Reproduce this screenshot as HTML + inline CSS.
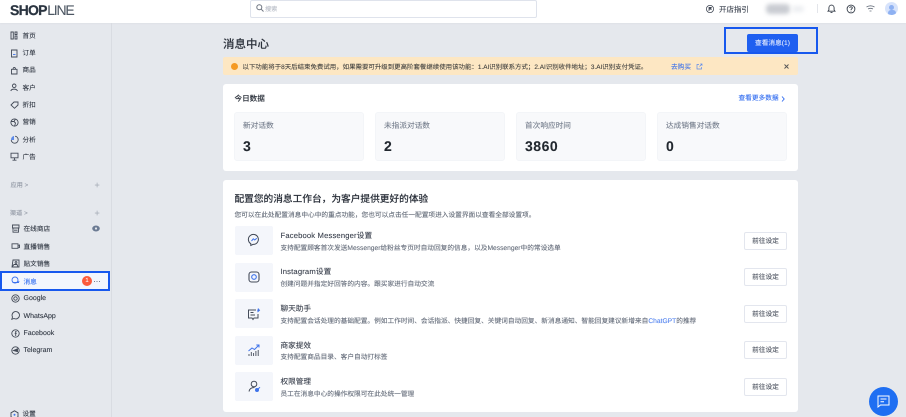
<!DOCTYPE html>
<html lang="zh"><head><meta charset="utf-8"><title>消息中心</title>
<style>
*{box-sizing:border-box}
html,body{margin:0;padding:0;width:906px;height:417px;overflow:hidden;background:#e5e8ed}
body{font-family:"Liberation Sans","Noto Sans CJK SC",sans-serif;color:#333b4a;text-rendering:geometricPrecision;-webkit-text-stroke:.08px currentColor}
#r{position:absolute;left:0;top:0;width:906px;height:417px;overflow:hidden;filter:blur(.35px)}
.a{position:absolute;white-space:nowrap}
.n{position:absolute;left:22.500px;font-size:6.600px;line-height:10px;color:#2b323e;white-space:nowrap}
.m{position:absolute;left:23.500px;font-size:6.700px;line-height:10px;color:#2b323e;white-space:nowrap}
.l{font-size:7px}
.card{position:absolute;background:#fff;border-radius:3px}
.st{position:absolute;top:112px;height:49px;width:130px;background:#f8f9fb;border:1px solid #f3f5f8;border-radius:3px}
.st b{position:absolute;left:8px;top:7px;font-size:7.670px;line-height:12px;font-weight:400;color:#747d8c}
.st i{position:absolute;left:8px;top:25px;font-style:normal;font-weight:700;font-size:14px;line-height:16px;color:#22282f;letter-spacing:.5px}
.ib{position:absolute;left:235px;width:38px;height:29px;background:#f4f6fb;border-radius:2px}
.t{position:absolute;left:280.500px;font-size:7.650px;line-height:10px;color:#343b48;white-space:nowrap}
.d{position:absolute;left:280.500px;font-size:6.700px;line-height:10px;color:#626a78;white-space:nowrap}
.b{position:absolute;left:744px;width:43px;height:18px;background:#fff;border:1px solid #e3e6ee;border-radius:2px;font-size:6.700px;line-height:17px;text-align:center;color:#444b58}
svg{position:absolute;overflow:visible;fill:none}
</style></head><body><div id="r">
<div class="a" style="left:0;top:0;width:906px;height:23px;background:#fff;box-shadow:0 1px 1px #dfe2e8"></div>
<div class="a" style="left:10px;top:3px;font-size:14px;line-height:14px;color:#2a3440"><b style="letter-spacing:-.75px;-webkit-text-stroke:.25px #2a3440">SHOP</b><span style="font-weight:400;color:#4d5763;letter-spacing:-1.200px;margin-left:.5px">LINE</span></div>
<div class="a" style="left:249.500px;top:0;width:287px;height:18px;background:#fff;border:1px solid #dfe3ec;border-radius:2px"></div>
<svg style="left:256px;top:4px" width="8" height="8" viewBox="0 0 8 8" stroke="#6d7480" stroke-width="1"><circle cx="3.300" cy="3.300" r="2.500"/><path d="M5.200 5.200L7.500 7.500"/></svg>
<div class="a" style="left:265px;top:5px;font-size:6.200px;line-height:9px;color:#b7bcc6">搜索</div>
<svg style="left:706px;top:4.500px" width="8" height="8" viewBox="0 0 8 8" stroke="#444b58" stroke-width=".8"><circle cx="4" cy="4" r="3.600"/><path d="M3 6V2.400h2.300L4.700 3.400 5.300 4.200H3" fill="#444b58"/></svg>
<div class="a" style="left:719px;top:3.500px;font-size:7.500px;line-height:11px;color:#3a414e">开店指引</div>
<div class="a" style="left:766px;top:4px;width:24px;height:10px;background:#c9ccd2;border-radius:4px;filter:blur(2px)"></div>
<div class="a" style="left:792px;top:6px;width:12px;height:6px;background:#eceef1;border-radius:3px;filter:blur(2px)"></div>
<div class="a" style="left:817px;top:4px;width:1px;height:9px;background:#e3e5ea"></div>
<svg style="left:827px;top:4px" width="9" height="10" viewBox="0 0 9 10" stroke="#333b47" stroke-width=".9"><path d="M1 7.200h7L7.100 6V3.800C7.100 2.300 6 1.100 4.500 1.100S1.900 2.300 1.900 3.800V6zM3.500 8.600h2"/></svg>
<svg style="left:846px;top:4px" width="10" height="10" viewBox="0 0 10 10" stroke="#333b47" stroke-width=".9"><circle cx="5" cy="5" r="3.900"/><path d="M3.700 3.900C3.800 2.400 6.300 2.400 6.300 3.900C6.300 4.900 5 4.900 5 6M5 6.800v.7"/></svg>
<svg style="left:866px;top:5px" width="9" height="8" viewBox="0 0 9 8" stroke="#666e7b" stroke-width=".8"><path d="M.5 2C3 .5 6 .5 8.500 2M2 4C3.500 3.200 5.500 3.200 7 4M3.500 6H5.500"/></svg>
<div class="a" style="left:885px;top:2px;width:13px;height:13px;border-radius:50%;background:#d7e3fb;overflow:hidden"><div class="a" style="left:4px;top:2.500px;width:5px;height:5px;border-radius:50%;background:#8eb1f2"></div><div class="a" style="left:2.500px;top:8px;width:8px;height:6px;border-radius:4px;background:#8eb1f2"></div></div>

<div class="a" style="left:111px;top:23px;width:1px;height:394px;background:#d9dce2"></div>

<svg style="left:10px;top:31px" width="8" height="9" viewBox="0 0 8 9" stroke="#434a57" stroke-width=".9"><path d="M1 1h2.300v7H1zM5 1h2v2.500H5zM5 5h2v3H5z"/></svg>
<svg style="left:10px;top:49px" width="8" height="9" viewBox="0 0 8 9" stroke="#434a57" stroke-width=".9"><path d="M1.500 1h5.500v7H1.500z"/><path d="M3 5.500h2.500" stroke="#3e73ea"/></svg>
<svg style="left:10px;top:66px" width="8" height="9" viewBox="0 0 8 9" stroke="#434a57" stroke-width=".9"><path d="M1.500 3.300h5.500V8H1.500zM3 3.300C3 .8 5.500 .8 5.500 3.300"/></svg>
<svg style="left:10px;top:83px" width="8" height="9" viewBox="0 0 8 9" stroke="#434a57" stroke-width=".9"><circle cx="4.200" cy="2.800" r="1.800"/><path d="M.8 8C1.500 5.500 6.500 5.500 7.500 8"/></svg>
<svg style="left:10px;top:101px" width="9" height="8" viewBox="0 0 9 8" stroke="#434a57" stroke-width=".9"><path d="M1 4L4 1h4v3L4.500 7.300z"/></svg>
<svg style="left:10px;top:118px" width="9" height="9" viewBox="0 0 9 9" stroke="#434a57" stroke-width=".9"><circle cx="4.500" cy="4.500" r="3.600"/><path d="M1 3.500h3l1.500 1.500-1 3.500M5.500 1L4 3.500"/></svg>
<svg style="left:10px;top:135px" width="9" height="9" viewBox="0 0 9 9" stroke="#434a57" stroke-width=".9"><path d="M5 1.200A3.500 3.500 0 1 1 1.200 5"/><path d="M4 1v4H1C1 3 2 1.300 4 1z" fill="#5d8ae8" stroke="none"/></svg>
<svg style="left:10px;top:152px" width="9" height="9" viewBox="0 0 9 9" stroke="#434a57" stroke-width=".9"><path d="M1 1.200h7v4.600H1zM4.500 6v2M2.500 8.200h4"/></svg>
<div class="n" style="top:31.500px">首页</div>
<div class="n" style="top:49px">订单</div>
<div class="n" style="top:66px">商品</div>
<div class="n" style="top:83.500px">客户</div>
<div class="n" style="top:101px">折扣</div>
<div class="n" style="top:118px">营销</div>
<div class="n" style="top:135.500px">分析</div>
<div class="n" style="top:152.500px">广告</div>
<div class="a" style="left:10.500px;top:181px;font-size:6.200px;line-height:10px;color:#8c93a0">应用 &gt;</div>
<div class="a" style="left:94.500px;top:180px;font-size:9px;line-height:11px;color:#a4aab5">+</div>
<div class="a" style="left:10px;top:208.500px;font-size:6.200px;line-height:10px;color:#8c93a0">渠道 &gt;</div>
<div class="a" style="left:94.500px;top:208px;font-size:9px;line-height:11px;color:#a4aab5">+</div>

<svg style="left:11px;top:224px" width="9" height="9" viewBox="0 0 9 9" stroke="#434a57" stroke-width=".9"><path d="M1.500 1h6.500v3H1.500zM2 4v4.200h5.500V4M3 6.200h3.500"/></svg>
<svg style="left:11px;top:242px" width="9" height="8" viewBox="0 0 9 8" stroke="#434a57" stroke-width=".9"><path d="M1 1.800h6v4.500H1zM7 3.500L8.500 3v2.500L7 5"/></svg>
<svg style="left:11px;top:259px" width="9" height="9" viewBox="0 0 9 9" stroke="#434a57" stroke-width=".9"><path d="M2 1h6v7H1zM1 8l2-2.500h3l1 2.500"/><circle cx="5" cy="3.500" r=".9"/></svg>
<svg style="left:11px;top:294px" width="9" height="9" viewBox="0 0 9 9" stroke="#434a57" stroke-width=".9"><circle cx="4.500" cy="4.500" r="3.700"/><circle cx="4.500" cy="4.500" r="1.700"/></svg>
<svg style="left:11px;top:311px" width="9" height="9" viewBox="0 0 9 9" stroke="#434a57" stroke-width=".9"><path d="M.8 8.300l.7-2.300A3.700 3.700 0 1 1 3 7.500z"/></svg>
<svg style="left:11px;top:329px" width="9" height="9" viewBox="0 0 9 9" stroke="#434a57" stroke-width=".9"><circle cx="4.500" cy="4.500" r="3.700"/><path d="M5.500 2.500H4.700V7M3.700 4.300h2"/></svg>
<svg style="left:11px;top:346px" width="9" height="9" viewBox="0 0 9 9" stroke="#434a57" stroke-width=".9"><circle cx="4.500" cy="4.500" r="3.700"/><path d="M6.500 2.800L2.500 4.500l4 1.200z" fill="#434a57"/></svg>

<div class="m" style="top:225px">在线商店</div>
<svg style="left:92px;top:225px" width="8" height="7" viewBox="0 0 8 7"><ellipse cx="4" cy="3.500" rx="3.800" ry="3" fill="#6c7b93"/><circle cx="4" cy="3.500" r="1.100" fill="#e5e8ed"/></svg>
<div class="m" style="top:242.500px">直播销售</div>
<div class="m" style="top:260px">贴文销售</div>
<div class="a" style="left:1px;top:272px;width:108px;height:18px;background:#f3f6fd"></div>
<div class="a" style="left:0;top:271px;width:110px;height:20px;border:2px solid #1758ee"></div>
<svg style="left:11px;top:276px" width="9" height="9" viewBox="0 0 9 9" stroke="#3a70ee" stroke-width=".9"><circle cx="4" cy="4" r="3"/><path d="M1.500 6.500h6L8 5"/></svg>
<div class="m" style="top:277.500px;color:#2f6bf0">消息</div>
<div class="a" style="left:82px;top:276px;width:10px;height:10px;border-radius:50%;background:#fb5a3c;color:#fff;font-size:6px;line-height:10px;text-align:center">1</div>
<div class="a" style="left:93.500px;top:280.500px;width:1px;height:1px;background:#777e8a;box-shadow:2.500px 0 #777e8a,5px 0 #777e8a"></div>
<div class="m l" style="top:294px">Google</div>
<div class="m l" style="top:311.500px">WhatsApp</div>
<div class="m l" style="top:329px">Facebook</div>
<div class="m l" style="top:346px">Telegram</div>
<svg style="left:10px;top:410px" width="9" height="9" viewBox="0 0 9 9" stroke="#434a57" stroke-width=".9"><path d="M4.500 .8L8 2.800v4L4.500 8.800 1 6.800v-4z"/><circle cx="4.500" cy="4.800" r="1" fill="#3e73ea" stroke="none"/></svg>
<div class="n" style="top:409.500px">设置</div>

<div class="a" style="left:223px;top:37px;font-size:11.500px;line-height:16px;font-weight:500;color:#2a303a">消息中心</div>
<div class="a" style="left:747px;top:34px;width:51px;height:18px;background:#1f5ff0;border-radius:2px;color:#eaf0ff;font-size:6.700px;line-height:19px;text-align:center">查看消息(1)</div>
<div class="a" style="left:724px;top:27px;width:94px;height:27px;border:2px solid #1758ee"></div>

<div class="a" style="left:223px;top:57px;width:575px;height:18px;background:#fde7c3;border-radius:2px"></div>
<div class="a" style="left:231px;top:63px;width:7px;height:7px;border-radius:50%;background:#f59a23"></div>
<div class="a" style="left:242.500px;top:62.500px;font-size:6.450px;line-height:10px;color:#3f3f3d">以下功能将于8天后结束免费试用，如果需要可升级到更高阶套餐继续使用该功能：1.AI识别联系方式；2.AI识别收件地址；3.AI识别支付凭证。</div>
<div class="a" style="left:671px;top:62.500px;font-size:6.700px;line-height:10px;color:#3e73ea">去购买</div>
<svg style="left:696px;top:62.500px" width="7" height="7" viewBox="0 0 7 7" stroke="#5c8bec" stroke-width=".7"><path d="M5.500 4v2H1V1.500h2M3.500 3.500L6 1M4.300 1H6v1.700"/></svg>
<svg style="left:784px;top:63.500px" width="5" height="5" viewBox="0 0 5 5" stroke="#555" stroke-width=".9"><path d="M.5 .5l4 4M4.500 .5l-4 4"/></svg>

<div class="card" style="left:223px;top:84px;width:575px;height:87px"></div>
<div class="a" style="left:234.500px;top:93px;font-size:7.600px;line-height:11px;font-weight:500;color:#2b313b">今日数据</div>
<div class="a" style="left:738.500px;top:94px;font-size:6.700px;line-height:10px;color:#2f6bf0">查看更多数据</div>
<svg style="left:781px;top:95.500px" width="4" height="6" viewBox="0 0 4 6" stroke="#2f6bf0" stroke-width=".9"><path d="M1 .5l2.200 2.500L1 5.500"/></svg>
<div class="st" style="left:234px"><b>新对话数</b><i>3</i></div>
<div class="st" style="left:375px"><b>未指派对话数</b><i>2</i></div>
<div class="st" style="left:516px"><b>首次响应时间</b><i>3860</i></div>
<div class="st" style="left:657px"><b>达成销售对话数</b><i>0</i></div>

<div class="card" style="left:223px;top:180px;width:575px;height:232px"></div>
<div class="a" style="left:234.500px;top:193px;font-size:9.700px;line-height:14px;font-weight:500;color:#282e38">配置您的消息工作台，为客户提供更好的体验</div>
<div class="a" style="left:234.500px;top:210.500px;font-size:6.700px;line-height:10px;color:#606875">您可以在此处配置消息中心中的重点功能，您也可以点击任一配置项进入设置界面以查看全部设置项。</div>

<div class="ib" style="top:226px"></div><div class="ib" style="top:263px"></div><div class="ib" style="top:299px"></div><div class="ib" style="top:335.500px"></div><div class="ib" style="top:372px"></div>
<svg style="left:248px;top:234px" width="12" height="13" viewBox="0 0 12 13" stroke="#3f4755" stroke-width="1"><path d="M2.800 11.500V9.700A5 5 0 1 1 5 10.400z"/><path d="M3.500 7L5.300 4.800 6.700 6 8.800 4.200" stroke="#3e73ea"/></svg>
<svg style="left:248px;top:271px" width="12" height="12" viewBox="0 0 12 12" stroke="#454c5a" stroke-width="1.100"><rect x="1" y="1" width="10" height="10" rx="2.500"/><circle cx="6" cy="6" r="2.300" stroke="#3e73ea"/></svg>
<svg style="left:247px;top:308px" width="14" height="13" viewBox="0 0 14 13" stroke="#454c5a" stroke-width="1"><path d="M9 2H1.500v8H5l1 1.500L7 10h4V6M3.500 4.500h3M3.500 7h4.500"/><path d="M11 .5l1.200 1.500H10.800L11 3.500l1.500-1.300" stroke="#3e73ea" fill="#3e73ea"/></svg>
<svg style="left:248px;top:344px" width="12" height="13" viewBox="0 0 12 13" stroke="#454c5a" stroke-width=".9"><path d="M1 12V10M3.300 12V8M5.600 12V9M7.900 12V7M10.200 12V6"/><path d="M.5 7L4 4l2.500 1.500L10.500 1.500M8.300 1h2.700v2.500" stroke="#3e73ea" stroke-width="1"/></svg>
<svg style="left:248px;top:380px" width="13" height="13" viewBox="0 0 13 13" stroke="#454c5a" stroke-width="1"><circle cx="6" cy="4" r="2.800"/><path d="M1 11.500C1.500 8.500 4 7.500 6.500 7.500"/><circle cx="9" cy="10" r="1.500" stroke="#3e73ea" fill="#3e73ea"/><path d="M10 9l2-1.700" stroke="#3e73ea"/></svg>

<div class="t" style="top:230.500px;letter-spacing:.02em">Facebook Messenger设置</div>
<div class="d" style="top:243.500px">支持配置顾客首次发送Messenger给粉丝专页时自动回复的信息，以及Messenger中的常设选单</div>
<div class="t" style="top:267px;letter-spacing:.02em">Instagram设置</div>
<div class="d" style="top:280px">创建问题并指定好回答的内容。跟买家进行自动交流</div>
<div class="t" style="top:304px">聊天助手</div>
<div class="d" style="top:316.500px">支持配置会话处理的基础配置。例如工作时间、会话指派、快捷回复、关键词自动回复、新消息通知、智能回复建议新增来自<span style="color:#4f80ef">ChatGPT</span>的推荐</div>
<div class="t" style="top:340.500px">商家提效</div>
<div class="d" style="top:353px">支持配置商品目录、客户自动打标签</div>
<div class="t" style="top:377px">权限管理</div>
<div class="d" style="top:389.500px">员工在消息中心的操作权限可在此处统一管理</div>

<div class="b" style="top:232px">前往设定</div>
<div class="b" style="top:268px">前往设定</div>
<div class="b" style="top:305px">前往设定</div>
<div class="b" style="top:341px">前往设定</div>
<div class="b" style="top:377.500px">前往设定</div>

<div class="a" style="left:869px;top:387px;width:29px;height:29px;border-radius:50%;background:#1f6ff2"></div>
<svg style="left:877px;top:395px" width="13" height="13" viewBox="0 0 13 13" stroke="#fff" stroke-width="1"><path d="M1 1h11v9H3.500L1 12z"/><path d="M3.500 4h6M3.500 6.800h3.500"/></svg>
</div></body></html>
